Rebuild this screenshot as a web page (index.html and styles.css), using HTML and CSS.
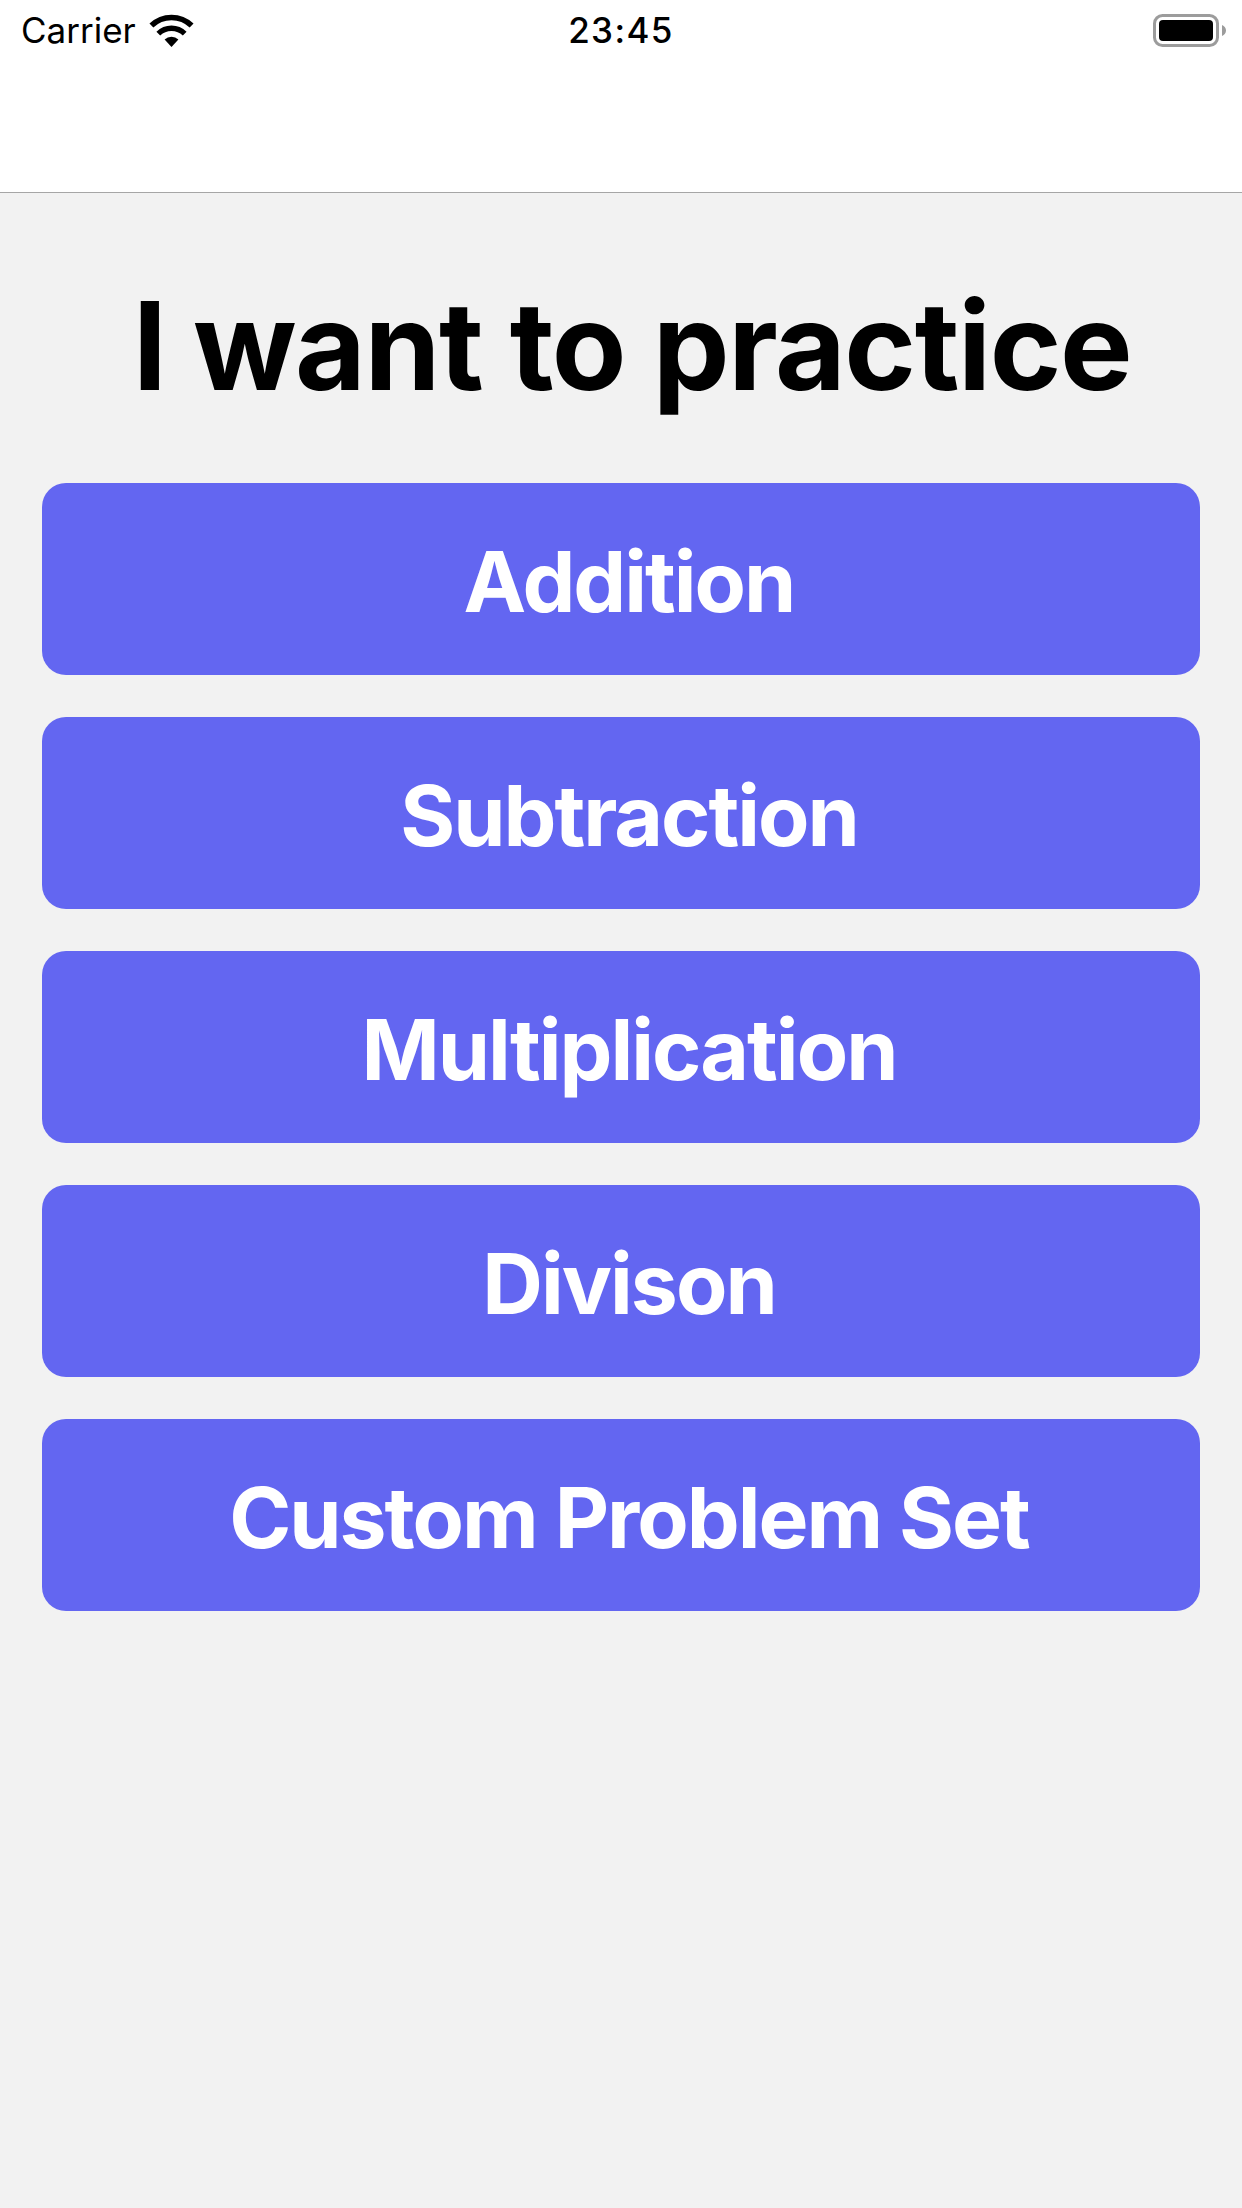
FILE: index.html
```html
<!DOCTYPE html>
<html lang="en">
<head>
    <meta charset="UTF-8">
    <meta name="viewport" content="width=device-width, initial-scale=1.0">
    <title>Practice</title>
    <link rel="stylesheet" href="styles.css">
</head>
<body>

<div class="topBar">
    <div class="statusBar">
        <div class="statusLeft">
            <span class="carrier">Carrier</span>
            <svg class="wifiIcon" width="45" height="33" viewBox="0 0 45 33">
                <path d="M22.5 33 L15.6 25.6 A10 10 0 0 1 29.4 25.6 Z" fill="#000"/>
                <path d="M9.3 19.6 A19 19 0 0 1 35.7 19.6" fill="none" stroke="#000" stroke-width="5.4"/>
                <path d="M2.4 11.6 A29 29 0 0 1 42.6 11.6" fill="none" stroke="#000" stroke-width="5.6"/>
            </svg>
        </div>
        <span class="clock">23:45</span>
        <div class="statusRight">
            <svg class="batteryIcon" width="73" height="33" viewBox="0 0 73 33">
                <rect x="1.5" y="1.5" width="63" height="30" rx="8" fill="none" stroke="#9c9c9c" stroke-width="3"/>
                <rect x="6" y="6" width="54" height="21" rx="4" fill="#000"/>
                <path d="M69 11 C71.5 12 73 14 73 16.5 C73 19 71.500 21 69 22 Z" fill="#9c9c9c"/>
            </svg>
        </div>
    </div>
</div>

<div class="content">
    <h1 class="pageTitle">I want to practice</h1>
    <div class="buttonList">
        <button class="practiceButton">Addition</button>
        <button class="practiceButton">Subtraction</button>
        <button class="practiceButton">Multiplication</button>
        <button class="practiceButton">Divison</button>
        <button class="practiceButton">Custom Problem Set</button>
    </div>
</div>

</body>
</html>
```

FILE: styles.css
```css
html, body {
    height: 100%;
}

body {
    font-family: Inter, "Liberation Sans", sans-serif;
    background-color: #f2f2f2;
    margin: 0;
    display: flex;
    flex-direction: column;
}

.topBar {
    height: 192px;
    background-color: #fff;
    border-bottom: 1px solid #a6a6a6;
}

.statusBar {
    display: flex;
    align-items: center;
    height: 60px;
    padding: 0 16px;
}

.statusLeft, .statusRight {
    flex: 1;
    display: flex;
    align-items: center;
}

.statusRight {
    justify-content: flex-end;
}

.carrier {
    font-size: 35px;
    margin-left: 5px;
    color: #000;
}

.wifiIcon {
    margin-left: 13px;
}

.clock {
    font-size: 35px;
    font-weight: 500;
    letter-spacing: 1.4px;
    color: #000;
}

.content {
    flex: 1;
    padding: 0 42px;
}

.pageTitle {
    margin: 78px 0 0;
    padding-left: 22px;
    height: 212px;
    font-size: 122px;
    line-height: 150px;
    font-weight: 700;
    letter-spacing: -1.4px;
    text-align: center;
    color: #000;
}

.buttonList {
    display: flex;
    flex-direction: column;
    gap: 42px;
}

.practiceButton {
    height: 192px;
    border: none;
    border-radius: 24px;
    background-color: #6366f1;
    color: #fff;
    font-family: inherit;
    font-size: 84px;
    font-weight: 660;
    letter-spacing: -2px;
    padding: 5px 0 0 16px;
}
```
